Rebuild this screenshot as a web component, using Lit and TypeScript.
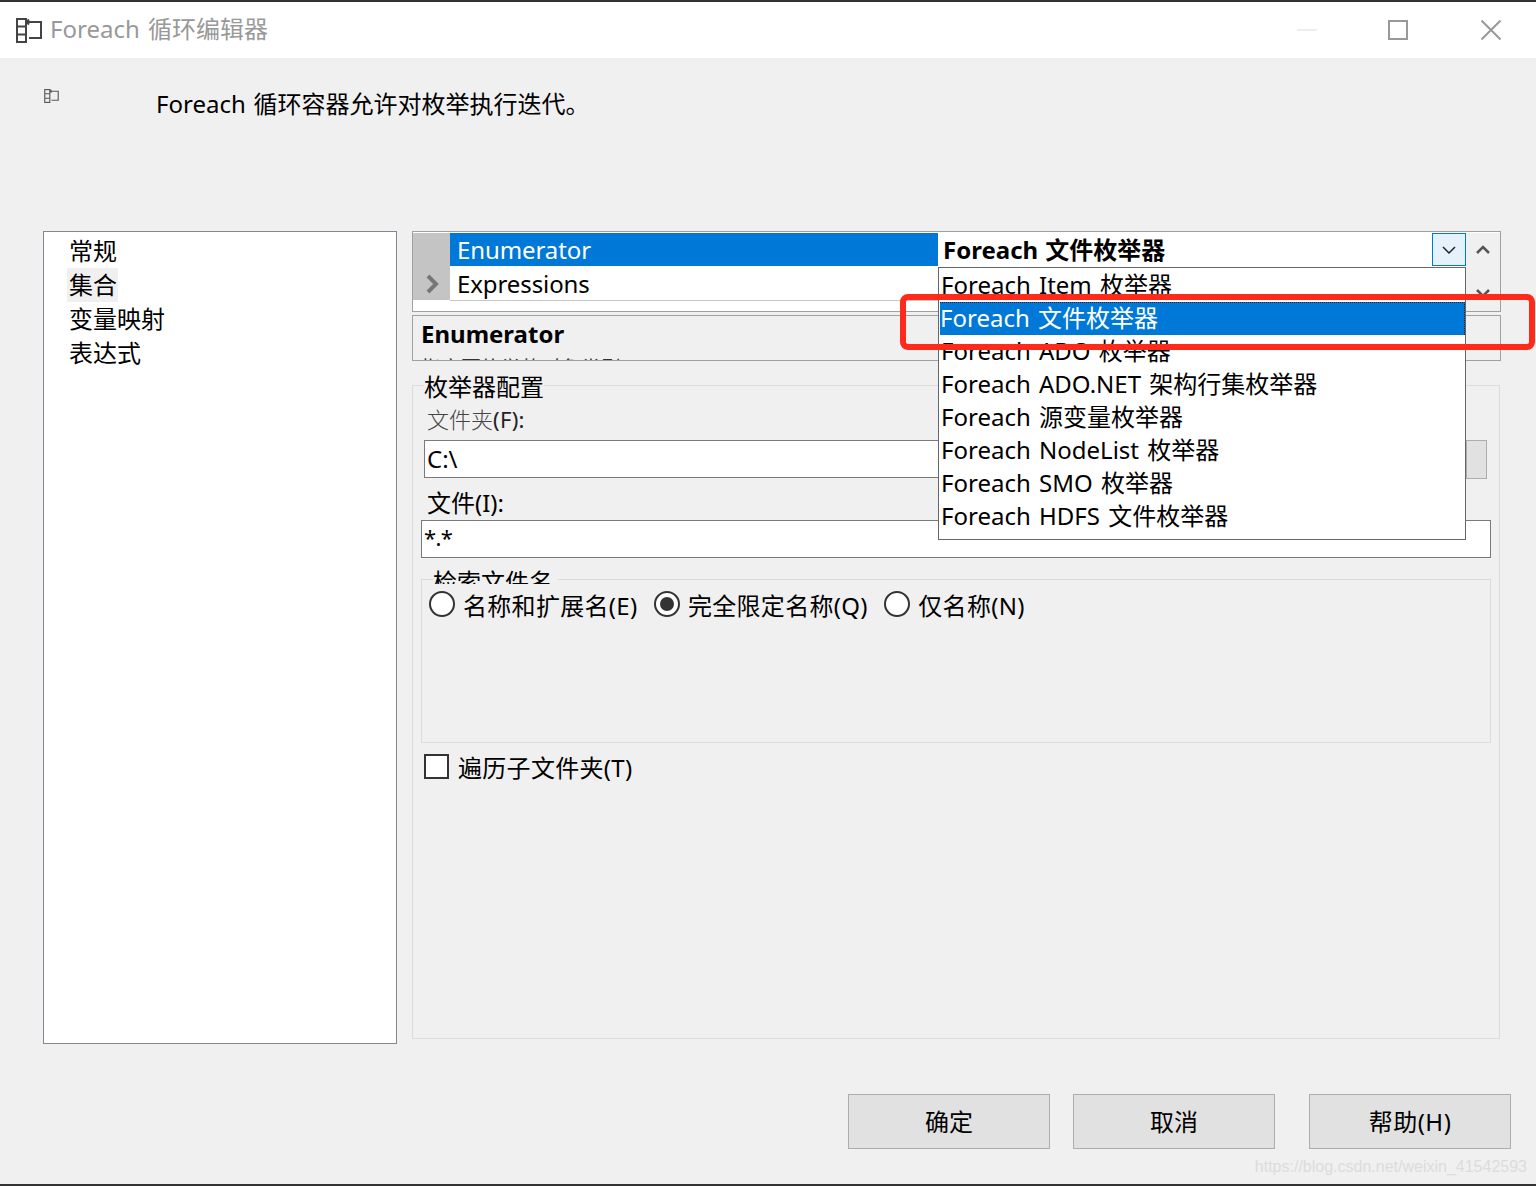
import { LitElement, html, css, svg } from "lit";
import { customElement } from "lit/decorators.js";

const ICON = svg`
  <rect x="1" y="1" width="9" height="23" fill="none" stroke="currentColor" stroke-width="2"/>
  <path d="M1 8.5H10M1 16.5H10" fill="none" stroke="currentColor" stroke-width="2"/>
  <path d="M10 4H25V20H13M13 1.5L10.5 4L13 6.5" fill="none" stroke="currentColor" stroke-width="2"/>`;

@customElement("app-root")
export class AppRoot extends LitElement {
  static styles = css`
    :host {
      display: block;
      font-family: "Noto Sans", "Noto Sans CJK SC", sans-serif;
      color: #000;
      font-size: 24px;
    }
    .win {
      position: relative;
      box-sizing: border-box;
      width: 1536px;
      height: 1186px;
      background: #f0f0f0;
      border-top: 2px solid #333;
      border-bottom: 2px solid #333;
      overflow: hidden;
    }
    .title {
      height: 56px;
      background: #fff;
      display: flex;
      align-items: center;
      padding-left: 16px;
    }
    .ticon { width: 26px; height: 25px; color: #444; margin-right: 8px; }
    .ttext { color: #999; font-size: 24px; line-height: 54px; height: 56px; flex: 1; white-space: nowrap; word-spacing: 2px; }
    .wb { display: flex; align-items: center; padding-right: 35px; gap: 0; }
    .wb svg { display: block; }
    .min { width: 20px; height: 2px; background: #eee; margin-right: 71px; }
    .max { width: 16px; height: 16px; border: 2px solid #999; margin-right: 73px; }
    .head {
      height: 173px;
      display: flex;
      align-items: flex-start;
      padding-left: 44px;
      box-sizing: border-box;
    }
    .hicon { width: 15px; height: 14px; color: #555; margin-top: 31px; margin-right: 97px; }
    .htext { line-height: 34px; margin-top: 29px; white-space: nowrap; word-spacing: 1.5px; }
    .main { display: flex; padding-left: 43px; gap: 15px; align-items: flex-start; height: 863px; }
    .nav {
      box-sizing: border-box;
      width: 354px;
      height: 813px;
      background: #fff;
      border: 1px solid #828790;
      padding: 2px 0 0 23px;
    }
    .nav div { height: 34px; line-height: 34px; padding-left: 2px; width: 49px; white-space: nowrap; }
    .nav div.sel { background: #f0f0f0; margin-top: 0; }
    .right { position: relative; width: 1089px; }
    .grid {
      box-sizing: border-box;
      height: 81px;
      padding-top: 1px;
      border: 1px solid #a0a0a0;
      background: #fff;
      display: flex;
    }
    .gutter { width: 37px; height: 67px; background: #c4c4c4; position: relative; }
    .gutter svg { position: absolute; left: 12px; top: 41px; }
    .props { width: 1016px; }
    .prow { display: flex; height: 34px; }
    .prow.two { height: 33px; border-bottom: 1px solid #c8c8c8; }
    .pname { width: 488px; line-height: 33px; padding-left: 7px; box-sizing: border-box; letter-spacing: -0.1px; }
    .pname.on { background: #0078d7; color: #fff; height: 33px; }
    .pval { flex: 1; display: flex; justify-content: space-between; padding-left: 5px; font-weight: 700; line-height: 33px; word-spacing: 1px; }
    .ddb {
      box-sizing: border-box;
      width: 34px;
      height: 33px;
      background: #e5f1fb;
      border: 1px solid #0078d7;
      display: flex;
      align-items: center;
      justify-content: center;
    }
    .sb {
      width: 34px;
      background: #f0f0f0;
      height: 78px;
      display: flex;
      flex-direction: column;
      align-items: center;
      padding-top: 12px;
      gap: 33px;
      box-sizing: border-box;
    }
    .desc {
      box-sizing: border-box;
      margin-top: 3px;
      height: 46px;
      border: 1px solid #a0a0a0;
      padding-left: 8px;
      overflow: hidden;
      line-height: 36px;
    }
    .desc b { display: block; height: 41px; }
    .desc span { font-size: 20px; line-height: 24px; color: #333; display: block; }
    .group {
      box-sizing: border-box;
      margin-top: 24px;
      height: 654px;
      width: 1088px;
      border: 1px solid #dcdcdc;
      position: relative;
      padding: 0 8px 0 8px;
    }
    .legend {
      display: block;
      width: max-content;
      background: #f0f0f0;
      margin: -16px 0 0 3px;
      padding: 0 0;
      line-height: 34px;
      height: 34px;
      white-space: nowrap;
    }
    .lab1 { margin: 0 0 0 6px; font-size: 22px; line-height: 30px; color: #222; height: 32px; white-space: nowrap; letter-spacing: 0.3px; }
    .lab1 i { font-style: normal; font-weight: 300; color: #444; letter-spacing: 0; }
    .frow { display: flex; margin-top: 4px; margin-left: 3px; }
    .inp {
      box-sizing: border-box;
      height: 38px;
      border: 1px solid #7a7a7a;
      background: #fff;
      line-height: 36px;
      padding-left: 2px;
      white-space: nowrap;
    }
    .i1 { width: 1042px; }
    .browse { box-sizing: border-box; width: 21px; height: 39px; background: #e1e1e1; border: 1px solid #adadad; }
    .lab2 { margin: 7px 0 0 6px; line-height: 34px; height: 34px; white-space: nowrap; }
    .i2 { width: 1070px; margin-top: 0; line-height: 32px; font-size: 22px; padding-left: 2px; letter-spacing: -0.6px; }
    .sub {
      box-sizing: border-box;
      margin-top: 21px;
      width: 1070px;
      height: 164px;
      border: 1px solid #dcdcdc;
      padding: 0 0 0 7px;
    }
    .subl {
      display: block;
      width: max-content;
      background: #f0f0f0;
      margin: -12px 0 0 4px;
      height: 16px;
      overflow: hidden;
      line-height: 28px;
      white-space: nowrap;
      padding: 0 5px 0 0;
    }
    .radios { display: flex; align-items: center; margin-top: 3px; height: 34px; }
    .radio { display: flex; align-items: center; gap: 8px; margin-right: 16.5px; white-space: nowrap; letter-spacing: 0.3px; }
    .dot {
      box-sizing: border-box;
      width: 26px;
      height: 26px;
      border-radius: 50%;
      border: 2px solid #333;
      background: #fff;
      display: flex;
      align-items: center;
      justify-content: center;
    }
    .dot::after { content: ""; width: 14px; height: 14px; border-radius: 50%; background: #333; display: none; }
    .dot.on::after { display: block; }
    .check { display: flex; align-items: center; gap: 9px; margin: 6px 0 0 3px; height: 34px; white-space: nowrap; letter-spacing: 0.3px; }
    .box { box-sizing: border-box; width: 25px; height: 25px; border: 2px solid #333; background: #fff; }
    .drop {
      position: absolute;
      left: 526px;
      top: 36px;
      width: 528px;
      height: 273px;
      box-sizing: border-box;
      border: 1px solid #666;
      background: #fff;
      z-index: 2;
      word-spacing: 2px;
    }
    .drop div { height: 33px; line-height: 33px; padding-left: 2px; white-space: nowrap; box-sizing: border-box; }
    .drop div.on { position: relative; top: 1px; background: #0078d7; color: #fff; border-top: 1px dotted #222; border-right: 1px dotted #222; margin-left: 1px; padding-left: 0; line-height: 29px; }
    .mark {
      position: absolute;
      z-index: 3;
      left: 900px;
      top: 292px;
      width: 635px;
      height: 56px;
      box-sizing: border-box;
      border: 6px solid #ff2a1a;
      border-radius: 8px;
    }
    .btns { position: absolute; left: 848px; top: 1092px; display: flex; }
    .btn {
      box-sizing: border-box;
      width: 202px;
      height: 55px;
      padding-bottom: 2px;
      background: #e1e1e1;
      border: 1px solid #adadad;
      display: flex;
      align-items: center;
      justify-content: center;
    }
    .b2 { margin-left: 23px; }
    .b3 { margin-left: 34px; letter-spacing: 0.5px; }
    .wm {
      position: absolute;
      right: 9px;
      top: 1154px;
      color: #dcdcdc;
      font: 16px/22px "Liberation Sans", sans-serif;
    }
  `;

  render() {
    const chev = (d: string, c: string, sw: number) => html`<svg width="16" height="10" viewBox="0 0 16 10"><path d="${d}" fill="none" stroke="${c}" stroke-width="${sw}"/></svg>`;
    return html`
      <div class="win">
        <div class="title">
          <svg class="ticon" viewBox="0 0 26 25">${ICON}</svg>
          <div class="ttext">Foreach 循环编辑器</div>
          <div class="wb">
            <div class="min"></div>
            <div class="max"></div>
            <svg width="20" height="20" viewBox="0 0 20 20"><path d="M0.5 0.5L19.5 19.5M19.5 0.5L0.5 19.5" stroke="#999" stroke-width="2" fill="none"/></svg>
          </div>
        </div>
        <div class="head">
          <svg class="hicon" viewBox="0 0 26 25">${ICON}</svg>
          <div class="htext">Foreach 循环容器允许对枚举执行迭代。</div>
        </div>
        <div class="main">
          <div class="nav">
            <div>常规</div>
            <div class="sel">集合</div>
            <div>变量映射</div>
            <div>表达式</div>
          </div>
          <div class="right">
            <div class="grid">
              <div class="gutter">
                <svg width="14" height="20" viewBox="0 0 14 20"><path d="M3 2L11 10L3 18" fill="none" stroke="#777" stroke-width="4"/></svg>
              </div>
              <div class="props">
                <div class="prow">
                  <div class="pname on">Enumerator</div>
                  <div class="pval">Foreach 文件枚举器
                    <div class="ddb">${chev("M2 2L8 8L14 2", "#222", 1.5)}</div>
                  </div>
                </div>
                <div class="prow two">
                  <div class="pname">Expressions</div>
                </div>
              </div>
              <div class="sb">
                ${chev("M2 8L8 2L14 8", "#555", 2.5)}
                ${chev("M2 2L8 8L14 2", "#555", 2.5)}
              </div>
            </div>
            <div class="desc">
              <b>Enumerator</b>
              <span>指定要枚举的对象类型。</span>
            </div>
            <div class="group">
              <span class="legend">枚举器配置</span>
              <div class="lab1"><i>文件夹</i>(F):</div>
              <div class="frow">
                <div class="inp i1">C:\\</div>
                <div class="browse"></div>
              </div>
              <div class="lab2">文件(I):</div>
              <div class="inp i2">*.*</div>
              <div class="sub">
                <span class="subl">检索文件名</span>
                <div class="radios">
                  <div class="radio"><span class="dot"></span>名称和扩展名(E)</div>
                  <div class="radio"><span class="dot on"></span>完全限定名称(Q)</div>
                  <div class="radio"><span class="dot"></span>仅名称(N)</div>
                </div>
              </div>
              <div class="check"><span class="box"></span>遍历子文件夹(T)</div>
            </div>
            <div class="drop">
              <div>Foreach Item 枚举器</div>
              <div class="on">Foreach 文件枚举器</div>
              <div>Foreach ADO 枚举器</div>
              <div>Foreach ADO.NET 架构行集枚举器</div>
              <div>Foreach 源变量枚举器</div>
              <div>Foreach NodeList 枚举器</div>
              <div>Foreach SMO 枚举器</div>
              <div>Foreach HDFS 文件枚举器</div>
            </div>
          </div>
        </div>
        <div class="mark"></div>
        <div class="btns">
          <div class="btn">确定</div>
          <div class="btn b2">取消</div>
          <div class="btn b3">帮助(H)</div>
        </div>
        <div class="wm">https://blog.csdn.net/weixin_41542593</div>
      </div>
    `;
  }
}
